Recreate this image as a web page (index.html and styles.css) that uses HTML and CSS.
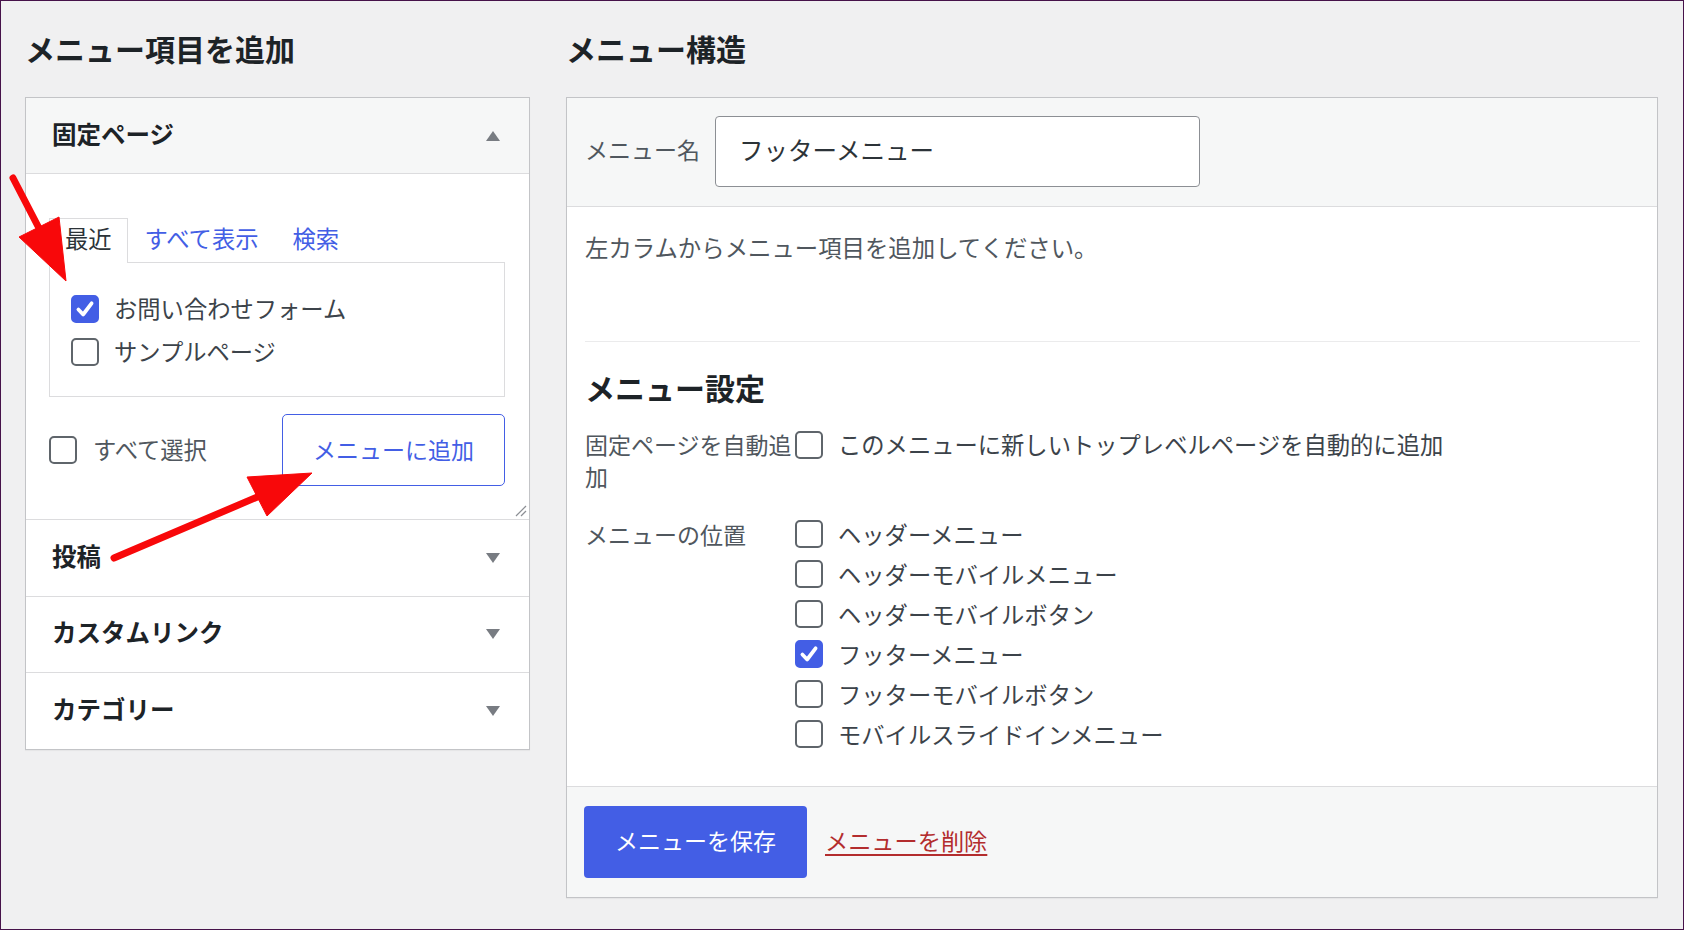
FILE: index.html
```html
<!DOCTYPE html>
<html lang="ja">
<head>
<meta charset="utf-8">
<title>メニュー</title>
<link rel="stylesheet" href="styles.css">
</head>
<body>
<div class="page">
  <div class="col-left">
    <h2 class="col-title">メニュー項目を追加</h2>
    <div class="accordion">
      <div class="acc-section open">
        <div class="acc-head">
          <h3>固定ページ</h3>
          <span class="tri up"></span>
        </div>
        <div class="acc-body">
          <div class="tabs">
            <span class="tab active">最近</span>
            <span class="tab link">すべて表示</span>
            <span class="tab link">検索</span>
          </div>
          <div class="tab-panel">
            <ul class="checklist">
              <li><span class="cb checked"><svg viewBox="0 0 20 20" width="22" height="22"><polyline points="4,10.5 8.3,15 16,4.8" fill="none" stroke="#fff" stroke-width="3.4" stroke-linecap="round" stroke-linejoin="round"/></svg></span><span class="txt">お問い合わせフォーム</span></li>
              <li><span class="cb"></span><span class="txt">サンプルページ</span></li>
            </ul>
          </div>
          <div class="actions">
            <label class="select-all"><span class="cb"></span><span class="txt">すべて選択</span></label>
            <button class="btn-secondary" type="button">メニューに追加</button>
          </div>
          <svg class="resize" viewBox="0 0 13 13" width="13" height="13"><line x1="12" y1="2" x2="2" y2="12" stroke="#8c8f94" stroke-width="1.2"/><line x1="12" y1="7" x2="7" y2="12" stroke="#8c8f94" stroke-width="1.2"/></svg>
        </div>
      </div>
      <div class="acc-section">
        <div class="acc-head"><h3>投稿</h3><span class="tri down"></span></div>
      </div>
      <div class="acc-section">
        <div class="acc-head"><h3>カスタムリンク</h3><span class="tri down"></span></div>
      </div>
      <div class="acc-section">
        <div class="acc-head"><h3>カテゴリー</h3><span class="tri down"></span></div>
      </div>
    </div>
  </div>

  <div class="col-right">
    <h2 class="col-title">メニュー構造</h2>
    <div class="menu-box">
      <div class="menu-head">
        <label class="name-label" for="menu-name">メニュー名</label>
        <input id="menu-name" class="name-input" type="text" value="フッターメニュー">
      </div>
      <div class="menu-body">
        <p class="instructions">左カラムからメニュー項目を追加してください。</p>
        <div class="settings">
          <h3>メニュー設定</h3>
          <div class="set-group first">
            <div class="set-name">固定ページを自動追加</div>
            <div class="set-opts">
              <div class="opt"><span class="cb"></span><span class="txt">このメニューに新しいトップレベルページを自動的に追加</span></div>
            </div>
          </div>
          <div class="set-group second">
            <div class="set-name">メニューの位置</div>
            <div class="set-opts">
              <div class="opt"><span class="cb"></span><span>ヘッダーメニュー</span></div>
              <div class="opt"><span class="cb"></span><span>ヘッダーモバイルメニュー</span></div>
              <div class="opt"><span class="cb"></span><span>ヘッダーモバイルボタン</span></div>
              <div class="opt"><span class="cb checked"><svg viewBox="0 0 20 20" width="22" height="22"><polyline points="4,10.5 8.3,15 16,4.8" fill="none" stroke="#fff" stroke-width="3.4" stroke-linecap="round" stroke-linejoin="round"/></svg></span><span>フッターメニュー</span></div>
              <div class="opt"><span class="cb"></span><span>フッターモバイルボタン</span></div>
              <div class="opt"><span class="cb"></span><span>モバイルスライドインメニュー</span></div>
            </div>
          </div>
        </div>
      </div>
      <div class="menu-foot">
        <button class="btn-primary" type="button">メニューを保存</button>
        <a class="delete-link" href="#">メニューを削除</a>
      </div>
    </div>
  </div>

  <svg class="annot" viewBox="0 0 1684 930" width="1684" height="930">
    <g fill="#f8080a" stroke="#f8080a">
      <line x1="13" y1="178" x2="42" y2="234" stroke-width="7" stroke-linecap="round"/>
      <polygon points="66,281 19,237 59,217" stroke-width="1" stroke-linejoin="round"/>
      <line x1="114" y1="558" x2="262" y2="495" stroke-width="7" stroke-linecap="round"/>
      <polygon points="312,473 247,477 267,516" stroke-width="1" stroke-linejoin="round"/>
    </g>
  </svg>
</div>
</body>
</html>
```

FILE: styles.css
```css
* { box-sizing: border-box; }

html, body {
  margin: 0;
  padding: 0;
}

body {
  background: #f0f0f1;
  font-family: "Noto Sans CJK JP", "Noto Sans", sans-serif;
  color: #3c434a;
  overflow: hidden;
}

.page {
  position: relative;
  width: 1684px;
  height: 930px;
  border: 1px solid #46124a;
  padding: 27px 25px 0 24px;
  display: flex;
  align-items: flex-start;
  gap: 36px;
}

.col-left { width: 505px; flex: none; }
.col-right { width: 1092px; flex: none; }

.col-title {
  margin: 0 0 29px;
  font-size: 30px;
  line-height: 40px;
  font-weight: 700;
  color: #1d2327;
}

/* ---------- left accordion ---------- */
.accordion {
  background: #fff;
  border: 1px solid #c3c4c7;
  box-shadow: 0 1px 1px rgba(0, 0, 0, 0.04);
}

.acc-section + .acc-section { border-top: 1px solid #dcdcde; }

.acc-head {
  height: 75.6px;
  display: flex;
  align-items: center;
  justify-content: space-between;
  padding: 0 29px 0 26px;
}

.open .acc-head {
  height: 76px;
  background: #f6f7f7;
  border-bottom: 1px solid #dcdcde;
}

.acc-head h3 {
  margin: 0;
  padding-bottom: 4px;
  font-size: 24.5px;
  line-height: 32px;
  font-weight: 700;
  color: #1d2327;
}

.tri {
  width: 0;
  height: 0;
  border-left: 7px solid transparent;
  border-right: 7px solid transparent;
}
.tri.up { border-bottom: 10px solid #787c82; }
.tri.down { border-top: 10px solid #787c82; }

.acc-body {
  position: relative;
  padding: 44px 24px 33px 23px;
}

.tabs {
  display: flex;
  margin-bottom: -1px;
}

.tab {
  height: 45px;
  padding: 0 15px;
  border: 1px solid transparent;
  border-bottom: none;
  font-size: 23.3px;
  line-height: 39px;
  color: #435ee5;
}

.tab.link { padding: 0 16px; }

.tab.active {
  position: relative;
  z-index: 1;
  background: #fff;
  border-color: #dcdcde;
  color: #2c3338;
}

.tab-panel {
  border: 1px solid #dcdcde;
  padding: 32px 20px 30px 21px;
}

.checklist {
  list-style: none;
  margin: 0;
  padding: 0;
  display: flex;
  flex-direction: column;
  gap: 15px;
}

.checklist li {
  display: flex;
  align-items: center;
  gap: 15px;
  height: 28px;
  font-size: 23.3px;
  color: #3c434a;
}

.txt { padding-bottom: 3px; }

.cb {
  width: 28px;
  height: 28px;
  flex: none;
  border: 2px solid #5f656b;
  border-radius: 5px;
  background: #fff;
  display: inline-flex;
  align-items: center;
  justify-content: center;
}

.cb.checked {
  background: #435ee5;
  border-color: #435ee5;
}

.actions {
  margin-top: 17px;
  display: flex;
  align-items: center;
  justify-content: space-between;
}

.select-all {
  display: flex;
  align-items: center;
  gap: 16px;
  font-size: 23.3px;
  color: #50575e;
}

.btn-secondary {
  width: 223px;
  height: 72px;
  background: #fff;
  border: 1px solid #435ee5;
  border-radius: 5px;
  color: #435ee5;
  font-family: "Noto Sans CJK JP", "Noto Sans", sans-serif;
  font-size: 23px;
  padding: 0 0 3px;
}

.resize {
  position: absolute;
  right: 2px;
  bottom: 2px;
}

/* ---------- right menu box ---------- */
.menu-box {
  background: #fff;
  border: 1px solid #c3c4c7;
  box-shadow: 0 1px 1px rgba(0, 0, 0, 0.04);
}

.menu-head {
  height: 109px;
  background: #f6f7f7;
  border-bottom: 1px solid #dcdcde;
  display: flex;
  align-items: center;
  gap: 15px;
  padding: 0 0 1px 18px;
}

.name-label {
  padding-bottom: 6px;
  font-size: 23px;
  line-height: 32px;
  color: #50575e;
}

.name-input {
  width: 485px;
  height: 71px;
  margin: 0;
  border: 1px solid #8c8f94;
  border-radius: 4px;
  padding: 0 23px 5px;
  background: #fff;
  font-family: "Noto Sans CJK JP", "Noto Sans", sans-serif;
  font-size: 24.5px;
  color: #2c3338;
  outline: none;
}

.menu-body {
  padding: 24px 17px 32px 18px;
}

.instructions {
  margin: 0;
  font-size: 23.4px;
  line-height: 32px;
  color: #50575e;
}

.settings {
  margin-top: 78px;
  border-top: 1px solid #ebebec;
  padding-top: 25px;
}

.settings h3 {
  margin: 0;
  font-size: 30px;
  line-height: 40px;
  font-weight: 700;
  color: #1d2327;
}

.set-group {
  display: flex;
}

.set-group.first { margin-top: 18px; }
.set-group.second { margin-top: 22px; }

.set-name {
  width: 210px;
  flex: none;
  padding-top: 3px;
  font-size: 23px;
  line-height: 32px;
  color: #50575e;
}

.second .set-name { padding-top: 4px; }

.set-opts {
  display: flex;
  flex-direction: column;
}

.opt {
  height: 40px;
  display: flex;
  align-items: center;
  gap: 15px;
  font-size: 23.3px;
  color: #3c434a;
  white-space: nowrap;
}

.menu-foot {
  background: #f6f7f7;
  border-top: 1px solid #dcdcde;
  padding: 19px 17px;
  display: flex;
  align-items: center;
  gap: 18px;
}

.btn-primary {
  width: 223px;
  height: 72px;
  padding: 0 0 4px;
  border: none;
  border-radius: 4px;
  background: #435ee5;
  color: #fff;
  font-family: "Noto Sans CJK JP", "Noto Sans", sans-serif;
  font-size: 23px;
}

.delete-link {
  display: inline-block;
  padding-bottom: 4px;
  font-size: 23.2px;
  color: #b32d2e;
  text-decoration: underline;
  text-decoration-thickness: 2px;
  text-underline-offset: 4px;
}

/* ---------- annotation arrows ---------- */
.annot {
  position: absolute;
  left: -1px;
  top: -1px;
  pointer-events: none;
  z-index: 5;
}
```
